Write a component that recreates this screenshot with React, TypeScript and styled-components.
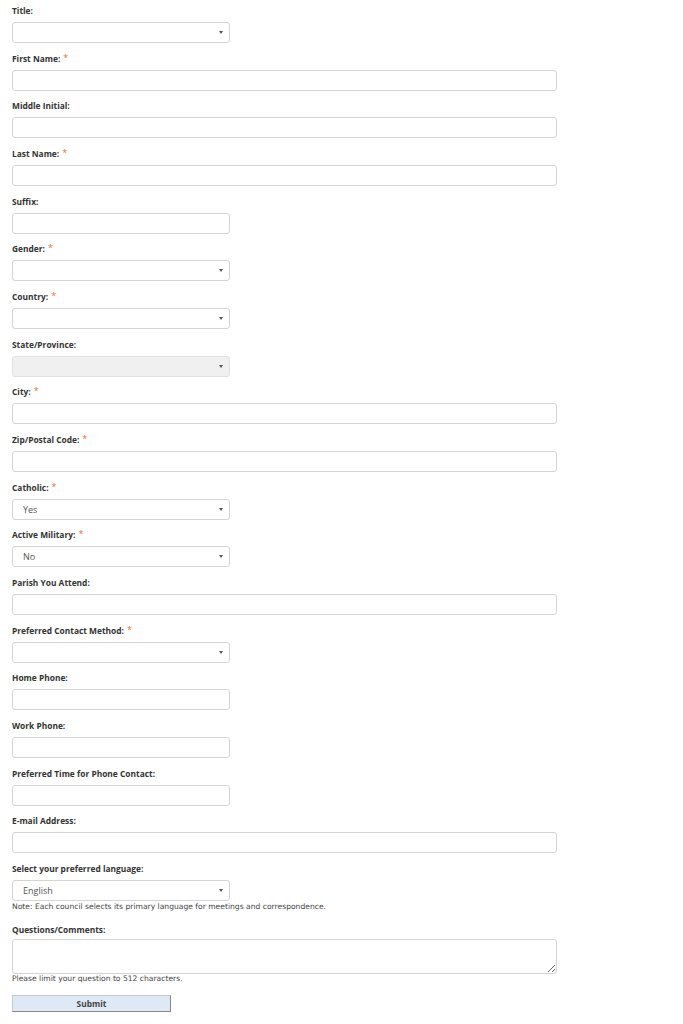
import React from "react";
import styled, { createGlobalStyle } from "styled-components";

const Global = createGlobalStyle`
  html, body { margin: 0; padding: 0; background: #fff; }
  body { font-family: "Open Sans", "DejaVu Sans", sans-serif; color: #333; }
  * { box-sizing: border-box; }
`;

const Form = styled.form`
  padding: 0 0 12px 12px;
  display: flex;
  flex-direction: column;
  width: 683px;
`;

const Field = styled.div<{ $last?: boolean }>`
  display: flex;
  flex-direction: column;
  margin-bottom: ${(p) => (p.$last ? 0 : 4.67)}px;
`;

const Label = styled.label<{ $h?: number; $pt?: number }>`
  display: block;
  height: ${(p) => p.$h ?? 22}px;
  padding-top: ${(p) => p.$pt ?? 5}px;
  font-size: 8.4px;
  line-height: 11px;
  font-weight: 700;
  color: #333;
  white-space: nowrap;
`;

const Star = styled.span`
  color: #f26b21;
  font-size: 9px;
  position: relative;
  top: -1px;
  margin-left: 3px;
  font-weight: 400;
`;

const boxBase = `
  display: block;
  height: 21px;
  border: 1px solid #d4d4d4;
  border-radius: 3px;
  background: #fff;
  font-family: "Open Sans", sans-serif;
  font-size: 9px;
  color: #555;
  outline: none;
  margin: 0;
`;

const TextInput = styled.input<{ $wide?: boolean }>`
  ${boxBase}
  width: ${(p) => (p.$wide ? "545px" : "218px")};
  padding: 0 10px;
`;

const SelectWrap = styled.div`
  position: relative;
  width: 218px;
  height: 21px;
`;

const Select = styled.select`
  ${boxBase}
  width: 218px;
  appearance: none;
  -webkit-appearance: none;
  padding: 0 0 0 10px;
  &:disabled {
    background: #ebebeb;
    color: #555;
  }
`;

const Arrow = styled.svg`
  position: absolute;
  right: 7px;
  top: 9px;
  width: 4px;
  height: 3px;
  pointer-events: none;
`;

const Note = styled.div<{ $top?: number }>`
  font-family: "DejaVu Sans", Verdana, sans-serif;
  font-size: 7.6px;
  line-height: 10px;
  color: #444;
  white-space: nowrap;
  margin-top: ${(p) => p.$top ?? 0}px;
`;

const TextArea = styled.textarea`
  ${boxBase}
  width: 545px;
  height: 35px;
  resize: vertical;
  padding: 4px 10px;
`;

const Submit = styled.button`
  margin-top: 11px;
  width: 159px;
  height: 17px;
  background: #dde9f5;
  border: 1px solid #c9c9c9;
  border-right-color: #888;
  border-bottom-color: #888;
  font-family: "Open Sans", sans-serif;
  font-weight: 700;
  font-size: 8.4px;
  color: #444;
  padding: 0;
  cursor: pointer;
`;

type FieldDef = {
  label: string;
  required?: boolean;
  kind: "select" | "wide" | "narrow";
  value?: string;
  disabled?: boolean;
};

const fields: FieldDef[] = [
  { label: "Title:", kind: "select" },
  { label: "First Name:", required: true, kind: "wide" },
  { label: "Middle Initial:", kind: "wide" },
  { label: "Last Name:", required: true, kind: "wide" },
  { label: "Suffix:", kind: "narrow" },
  { label: "Gender:", required: true, kind: "select" },
  { label: "Country:", required: true, kind: "select" },
  { label: "State/Province:", kind: "select", disabled: true },
  { label: "City:", required: true, kind: "wide" },
  { label: "Zip/Postal Code:", required: true, kind: "wide" },
  { label: "Catholic:", required: true, kind: "select", value: "Yes" },
  { label: "Active Military:", required: true, kind: "select", value: "No" },
  { label: "Parish You Attend:", kind: "wide" },
  { label: "Preferred Contact Method:", required: true, kind: "select" },
  { label: "Home Phone:", kind: "narrow" },
  { label: "Work Phone:", kind: "narrow" },
  { label: "Preferred Time for Phone Contact:", kind: "narrow" },
  { label: "E-mail Address:", kind: "wide" },
];

const DropArrow = () => (
  <Arrow viewBox="0 0 4 3">
    <path d="M0 0 L4 0 L2 3 Z" fill="#555" />
  </Arrow>
);

const SelectBox = ({ value, disabled }: { value?: string; disabled?: boolean }) => (
  <SelectWrap>
    <Select disabled={disabled} defaultValue={value ?? ""}>
      <option value={value ?? ""}>{value ?? ""}</option>
    </Select>
    <DropArrow />
  </SelectWrap>
);

export default function App() {
  return (
    <>
      <Global />
      <Form onSubmit={(e) => e.preventDefault()}>
        {fields.map((f) => (
          <Field key={f.label}>
            <Label>
              {f.label}
              {f.required && <Star>*</Star>}
            </Label>
            {f.kind === "select" ? (
              <SelectBox value={f.value} disabled={f.disabled} />
            ) : (
              <TextInput $wide={f.kind === "wide"} />
            )}
          </Field>
        ))}
        <Field $last>
          <Label>Select your preferred language:</Label>
          <SelectBox value="English" />
          <Note $top={1}>
            Note: Each council selects its primary language for meetings and correspondence.
          </Note>
        </Field>
        <Field $last>
          <Label $h={27} $pt={12}>Questions/Comments:</Label>
          <TextArea />
          <Note>Please limit your question to 512 characters.</Note>
        </Field>
        <div>
          <Submit type="submit">Submit</Submit>
        </div>
      </Form>
    </>
  );
}
